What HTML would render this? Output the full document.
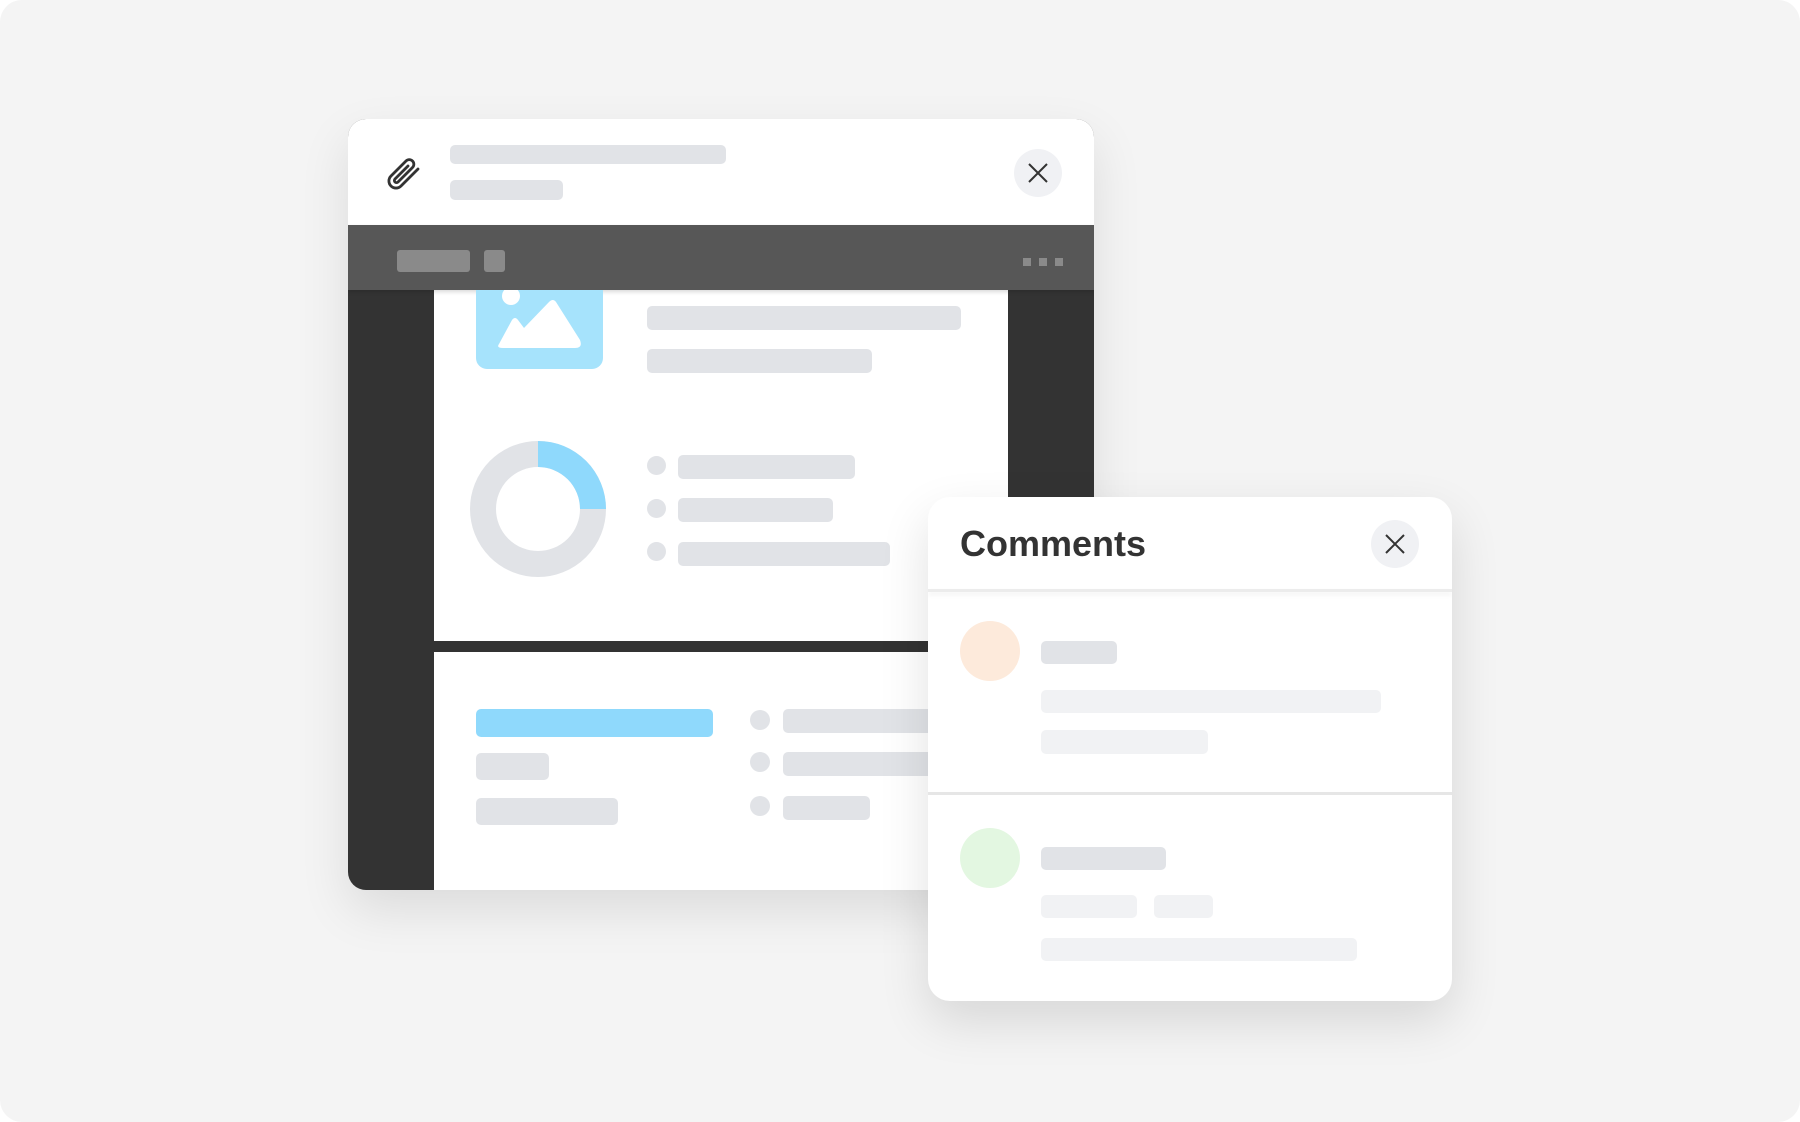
<!DOCTYPE html>
<html><head><meta charset="utf-8"><style>
*{margin:0;padding:0;box-sizing:border-box}
html,body{width:1800px;height:1122px;background:#fff;overflow:hidden;font-family:"Liberation Sans",sans-serif}
.bg{position:absolute;left:0;top:0;width:1800px;height:1122px;background:#f4f4f4;border-radius:22px}
.a{position:absolute}
.b{position:absolute;border-radius:5px;background:#e1e3e7}
.l{position:absolute;border-radius:5px;background:#f1f2f4}
.d{position:absolute;border-radius:50%;background:#e1e3e7}
</style></head><body>
<div class="bg"></div>
<div class="a" style="left:348px;top:119px;width:746px;height:771px;border-radius:18px;background:#333;overflow:hidden;box-shadow:0 20px 50px rgba(0,0,0,0.10)">
  <div class="a" style="left:0;top:0;width:746px;height:106px;background:#fff"></div>
  <div class="a" style="left:86px;top:171px;width:574px;height:351px;background:#fff"></div>
  <div class="a" style="left:86px;top:533px;width:660px;height:240px;background:#fff"></div>
  <div class="a" style="left:0;top:106px;width:746px;height:65px;background:#575757;box-shadow:0 2px 4px rgba(0,0,0,0.15)"></div>
</div>
<svg class="a" style="left:380px;top:150px" width="48" height="48" viewBox="0 0 48 48">
  <path d="M38 19 L21 36 a7 7 0 0 1 -10 -10 L26 11 a4.5 4.5 0 0 1 6.5 6.5 L18 32 a2 2 0 0 1 -3 -3 L28 16" fill="none" stroke="#333" stroke-width="2.8" stroke-linecap="round" stroke-linejoin="round"/>
</svg>
<div class="b" style="left:450px;top:145px;width:276px;height:19px"></div>
<div class="b" style="left:450px;top:180px;width:113px;height:20px"></div>
<div class="a" style="left:1014px;top:149px;width:48px;height:48px;border-radius:50%;background:#f0f1f4"></div>
<svg class="a" style="left:1014px;top:149px" width="48" height="48"><path d="M15 15L33 33M33 15L15 33" stroke="#333" stroke-width="2"/></svg>
<div class="a" style="left:397px;top:250px;width:73px;height:22px;border-radius:3px;background:#8a8a8a"></div>
<div class="a" style="left:484px;top:250px;width:21px;height:22px;border-radius:3px;background:#8a8a8a"></div>
<div class="a" style="left:1023px;top:258px;width:8px;height:8px;background:#8a8a8a"></div>
<div class="a" style="left:1039px;top:258px;width:8px;height:8px;background:#8a8a8a"></div>
<div class="a" style="left:1055px;top:258px;width:8px;height:8px;background:#8a8a8a"></div>
<div class="a" style="left:476px;top:290px;width:127px;height:79px;overflow:hidden">
  <svg width="127" height="79" viewBox="0 0 127 79" style="position:absolute;left:0;top:0">
    <path d="M0 -20 H127 V68 a11 11 0 0 1 -11 11 H11 a11 11 0 0 1 -11 -11Z" fill="#a6e3fc"/>
    <ellipse cx="35" cy="6" rx="9" ry="9" fill="#fff"/>
    <path d="M23 54 L36 30 Q39 26 42 30 L48 38 L73 12 Q77 8 80 12 L104 50 Q107 58 99 58 L27 58 Q20 58 23 54 Z" fill="#fff"/>
  </svg>
</div>
<div class="b" style="left:647px;top:306px;width:314px;height:24px"></div>
<div class="b" style="left:647px;top:349px;width:225px;height:24px"></div>
<svg class="a" style="left:470px;top:441px" width="136" height="136" viewBox="0 0 136 136">
  <circle cx="68" cy="68" r="55" fill="none" stroke="#e1e3e7" stroke-width="26"/>
  <path d="M68 0 A68 68 0 0 1 136 68 L110 68 A42 42 0 0 0 68 26 Z" fill="#8fd9fc"/>
</svg>
<div class="d" style="left:647px;top:456px;width:19px;height:19px"></div>
<div class="d" style="left:647px;top:499px;width:19px;height:19px"></div>
<div class="d" style="left:647px;top:542px;width:19px;height:19px"></div>
<div class="b" style="left:678px;top:455px;width:177px;height:24px"></div>
<div class="b" style="left:678px;top:498px;width:155px;height:24px"></div>
<div class="b" style="left:678px;top:542px;width:212px;height:24px"></div>
<div class="b" style="left:476px;top:709px;width:237px;height:28px;background:#8fd9fc"></div>
<div class="b" style="left:476px;top:753px;width:73px;height:27px"></div>
<div class="b" style="left:476px;top:798px;width:142px;height:27px"></div>
<div class="d" style="left:750px;top:710px;width:20px;height:20px"></div>
<div class="d" style="left:750px;top:752px;width:20px;height:20px"></div>
<div class="d" style="left:750px;top:796px;width:20px;height:20px"></div>
<div class="b" style="left:783px;top:709px;width:180px;height:24px"></div>
<div class="b" style="left:783px;top:752px;width:180px;height:24px"></div>
<div class="b" style="left:783px;top:796px;width:87px;height:24px"></div>
<div class="a" style="left:928px;top:497px;width:524px;height:504px;border-radius:22px;background:#fff;overflow:hidden;box-shadow:0 20px 50px rgba(0,0,0,0.12)">
  <div class="a" style="left:0;top:92px;width:524px;height:3px;background:#ececec;box-shadow:0 3px 5px rgba(0,0,0,0.06)"></div>
  <div class="a" style="left:0;top:295px;width:524px;height:3px;background:#e6e6e6"></div>
  <div class="a" style="left:32px;top:22px;font-size:36px;font-weight:bold;color:#333;line-height:50px">Comments</div>
</div>
<div class="a" style="left:1371px;top:520px;width:48px;height:48px;border-radius:50%;background:#f0f1f4"></div>
<svg class="a" style="left:1371px;top:520px" width="48" height="48"><path d="M15 15L33 33M33 15L15 33" stroke="#333" stroke-width="2"/></svg>
<div class="a" style="left:960px;top:621px;width:60px;height:60px;border-radius:50%;background:#fdeadb"></div>
<div class="b" style="left:1041px;top:641px;width:76px;height:23px"></div>
<div class="l" style="left:1041px;top:690px;width:340px;height:23px"></div>
<div class="l" style="left:1041px;top:730px;width:167px;height:24px"></div>
<div class="a" style="left:960px;top:828px;width:60px;height:60px;border-radius:50%;background:#e3f7e1"></div>
<div class="b" style="left:1041px;top:847px;width:125px;height:23px"></div>
<div class="l" style="left:1041px;top:895px;width:96px;height:23px"></div>
<div class="l" style="left:1154px;top:895px;width:59px;height:23px"></div>
<div class="l" style="left:1041px;top:938px;width:316px;height:23px"></div>
</body></html>
